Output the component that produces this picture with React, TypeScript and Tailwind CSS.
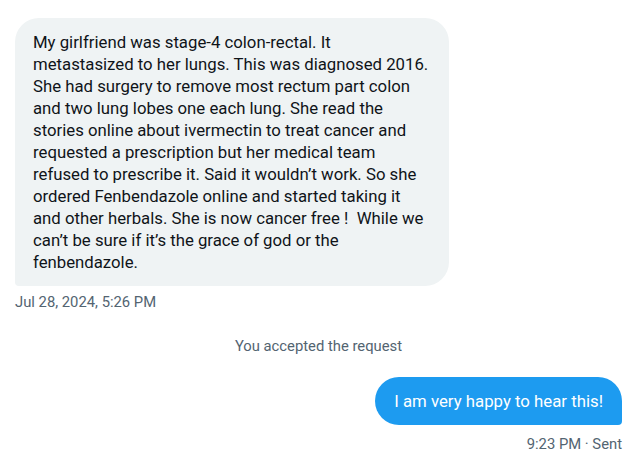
const lines = [
  'My girlfriend was stage-4 colon-rectal. It',
  'metastasized to her lungs. This was diagnosed 2016.',
  'She had surgery to remove most rectum part colon',
  'and two lung lobes one each lung. She read the',
  'stories online about ivermectin to treat cancer and',
  'requested a prescription but her medical team',
  'refused to prescribe it. Said it wouldn’t work. So she',
  'ordered Fenbendazole online and started taking it',
  'and other herbals. She is now cancer free !  While we',
  'can’t be sure if it’s the grace of god or the',
  'fenbendazole.',
];

export default function App() {
  return (
    <div className="min-h-[454px] bg-white pl-[15px] pr-[13px] pt-[18px] font-['Roboto',sans-serif] text-[#0f1419]">
      <div className="flex flex-col items-start">
        <div className="w-[434px] rounded-[24px] rounded-bl-[4px] bg-[#eff3f4] px-[18px] py-[13px] text-[16.75px] leading-[22px]">
          {lines.map((l, i) => (
            <div key={i} className="whitespace-pre">{l}</div>
          ))}
        </div>
        <div className="mt-[7px] text-[14.8px] leading-[18px] text-[#536471]">Jul 28, 2024, 5:26 PM</div>
      </div>

      <div className="mt-[26px] text-center text-[14.8px] leading-[18px] text-[#536471]">You accepted the request</div>

      <div className="mt-[22px] flex flex-col items-end">
        <div className="rounded-[24px] rounded-br-[4px] bg-[#1d9bf0] px-[19px] py-[13px] text-[16.8px] leading-[22px] text-white">
          I am very happy to hear this!
        </div>
        <div className="mt-[10px] text-[14.8px] leading-[18px] text-[#536471]">9:23 PM · Sent</div>
      </div>
    </div>
  );
}
